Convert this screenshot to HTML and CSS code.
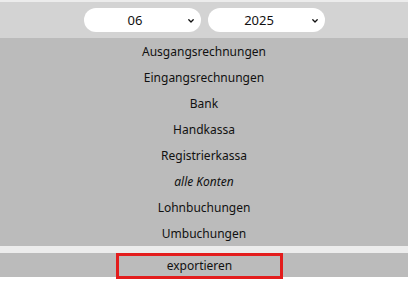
FILE: index.html
```html
<!DOCTYPE html>
<html lang="de">
<head>
<meta charset="utf-8">
<link rel="stylesheet" href="styles.css">
</head>
<body>
<header class="filters">
  <div class="select">
    <span class="value">06</span>
    <svg class="chev" width="6" height="4" viewBox="0 0 6 4"><path d="M0.8 0.8 L3 3 L5.2 0.8" fill="none" stroke="#111" stroke-width="1.3" stroke-linecap="round" stroke-linejoin="round"/></svg>
  </div>
  <div class="select">
    <span class="value">2025</span>
    <svg class="chev" width="6" height="4" viewBox="0 0 6 4"><path d="M0.8 0.8 L3 3 L5.2 0.8" fill="none" stroke="#111" stroke-width="1.3" stroke-linecap="round" stroke-linejoin="round"/></svg>
  </div>
</header>
<nav class="menu">
  <div class="item">Ausgangsrechnungen</div>
  <div class="item">Eingangsrechnungen</div>
  <div class="item">Bank</div>
  <div class="item">Handkassa</div>
  <div class="item">Registrierkassa</div>
  <div class="item italic">alle Konten</div>
  <div class="item">Lohnbuchungen</div>
  <div class="item">Umbuchungen</div>
</nav>
<div class="spacer"></div>
<div class="actions">
  <div class="export">exportieren</div>
</div>
</body>
</html>
```
FILE: styles.css
```css
html, body {
  margin: 0;
  padding: 0;
}
body {
  background: #ffffff;
  font-family: "Noto Sans", "Open Sans", sans-serif;
  color: #111;
  width: 408px;
  height: 281px;
  overflow: hidden;
}
.filters {
  border-top: 2px solid #ececec;
  background: #d3d3d3;
  height: 36px;
  display: flex;
  justify-content: center;
  align-items: center;
  gap: 7px;
}
.select {
  width: 117px;
  height: 24px;
  background: #fff;
  border-radius: 12px;
  display: flex;
  align-items: center;
  box-sizing: border-box;
  padding: 0 7px 0 0;
  font-size: 13px;
}
.select .value {
  flex: 1;
  text-align: center;
  line-height: 24px;
}
.select .chev {
  display: block;
  margin-left: 1px;
  margin-top: 1px;
}
.menu {
  background: #bbbbbb;
}
.item {
  height: 26px;
  box-sizing: border-box;
  padding-top: 1px;
  line-height: 25px;
  text-align: center;
  font-size: 12px;
}
.italic {
  font-style: italic;
}
.spacer {
  height: 7px;
  background: #ececec;
}
.actions {
  background: #bbbbbb;
  height: 24px;
  display: flex;
  padding-left: 116px;
}
.export {
  width: 167px;
  height: 26px;
  box-sizing: border-box;
  border: 3px solid #e31c1c;
  text-align: center;
  line-height: 20px;
  font-size: 12px;
  flex-shrink: 0;
}
```
